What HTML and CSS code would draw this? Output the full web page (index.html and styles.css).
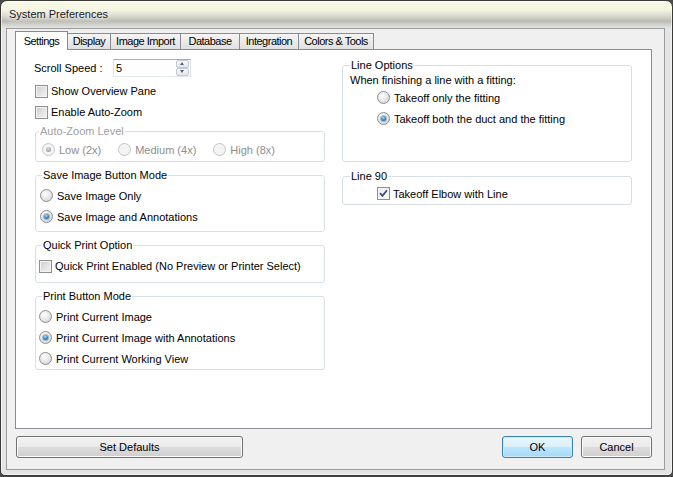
FILE: index.html
```html
<!DOCTYPE html>
<html>
<head>
  <title>System Preferences</title>
  <link rel="stylesheet" href="styles.css">
</head>
<body>
  <div class="window">
    <div class="titlebar">System Preferences</div>

    <div class="client">
      <div class="tabs">
        <div class="tab tab-settings selected">Settings</div>
        <div class="tab tab-display">Display</div>
        <div class="tab tab-import">Image Import</div>
        <div class="tab tab-database">Database</div>
        <div class="tab tab-integration">Integration</div>
        <div class="tab tab-colors">Colors &amp; Tools</div>
      </div>

      <div class="tab-page">
        <!-- left column -->
        <div class="column">
          <div class="speed-row">
            <span class="speed-label">Scroll Speed :</span>
            <div class="spin">
              <span>5</span>
              <div class="spin-buttons">
                <span class="spin-btn up"></span>
                <span class="spin-btn down"></span>
              </div>
            </div>
          </div>
          <div class="option top-check"><span class="checkbox"></span>Show Overview Pane</div>
          <div class="option top-check"><span class="checkbox"></span>Enable Auto-Zoom</div>

          <fieldset class="group group-zoom disabled">
            <legend>Auto-Zoom Level</legend>
            <div class="zoom-levels">
              <div class="option"><span class="radio checked"></span>Low (2x)</div>
              <div class="option"><span class="radio"></span>Medium (4x)</div>
              <div class="option"><span class="radio"></span>High (8x)</div>
            </div>
          </fieldset>

          <fieldset class="group group-save">
            <legend>Save Image Button Mode</legend>
            <div class="group-body">
              <div class="option row"><span class="radio"></span>Save Image Only</div>
              <div class="option row"><span class="radio checked"></span>Save Image and Annotations</div>
            </div>
          </fieldset>

          <fieldset class="group group-quick">
            <legend>Quick Print Option</legend>
            <div class="group-body">
              <div class="option row-tall"><span class="checkbox"></span>Quick Print Enabled (No Preview or Printer Select)</div>
            </div>
          </fieldset>

          <fieldset class="group group-print">
            <legend>Print Button Mode</legend>
            <div class="group-body">
              <div class="option row"><span class="radio"></span>Print Current Image</div>
              <div class="option row"><span class="radio checked"></span>Print Current Image with Annotations</div>
              <div class="option row"><span class="radio"></span>Print Current Working View</div>
            </div>
          </fieldset>
        </div>

        <!-- right column -->
        <div class="column right">
          <fieldset class="group group-line">
            <legend>Line Options</legend>
            <div class="group-body">
              <div class="line-desc">When finishing a line with a fitting:</div>
              <div class="line-choices">
                <div class="option row"><span class="radio"></span>Takeoff only the fitting</div>
                <div class="option row"><span class="radio checked"></span>Takeoff both the duct and the fitting</div>
              </div>
            </div>
          </fieldset>

          <fieldset class="group group-line90">
            <legend>Line 90</legend>
            <div class="group-body">
              <div class="option row">
                <span class="checkbox checked">
                  <svg width="11" height="11" viewBox="0 0 11 11"><path d="M2 5.2 L4.4 7.8 L9 2.2" fill="none" stroke="#3b4f86" stroke-width="1.8"/></svg>
                </span>Takeoff Elbow with Line
              </div>
            </div>
          </fieldset>
        </div>
      </div>

      <div class="buttons">
        <div class="btn btn-defaults">Set Defaults</div>
        <div class="btn btn-ok default">OK</div>
        <div class="btn btn-cancel">Cancel</div>
      </div>
    </div>
  </div>
</body>
</html>
```

FILE: styles.css
```css
* {
  box-sizing: border-box;
}

body {
  margin: 0;
  background-color: #4a4a4a;
  font-family: "Liberation Sans", Arial, sans-serif;
  font-size: 11px;
  color: #000;
}

.window {
  width: 673px;
  height: 476px;
  border: 1px solid #3a3a36;
  border-radius: 7px 7px 5px 5px;
  overflow: hidden;
  background: linear-gradient(to bottom, #f8f8e6 0px, #f5f5e2 9px, #dadace 15px, #babab2 20px, #d4d4d0 24px, #e3e4e5 27px, #e3e4e5 100%);
  box-shadow: inset 0 0 0 1px rgba(255, 255, 255, 0.6);
}

.titlebar {
  height: 27px;
  line-height: 27px;
  padding-left: 8px;
  color: #1a1a1a;
  text-shadow: 0 0 6px #fff, 0 0 10px #fff;
}

.client {
  width: 659px;
  height: 442px;
  margin-left: 5px;
  border: 1px solid #9b9b9b;
  background-color: #f0f0f0;
  padding: 2px 12px 0 8px;
}

/* tab strip */
.tabs {
  display: flex;
  align-items: flex-end;
  height: 18px;
}

.tab {
  height: 16px;
  line-height: 15px;
  margin-left: -1px;
  text-align: center;
  letter-spacing: -0.5px;
  border: 1px solid #898c95;
  border-bottom: none;
  background: linear-gradient(to bottom, #f5f5f5, #e0e0e0);
}

.tab.selected {
  position: relative;
  z-index: 1;
  height: 19px;
  line-height: 18px;
  margin-bottom: -1px;
  background: #fff;
}

.tab-settings { width: 53px; margin-left: 0; }
.tab-display { width: 44px; }
.tab-import { width: 71px; }
.tab-database { width: 60px; }
.tab-integration { width: 60px; }
.tab-colors { width: 76px; }

.tab-page {
  display: flex;
  gap: 17px;
  height: 380px;
  padding: 0 19px;
  border: 1px solid #898c95;
  background-color: #fff;
}

.column {
  width: 290px;
}

/* scroll speed */
.speed-row {
  display: flex;
  align-items: center;
  margin-top: 9px;
  height: 18px;
}

.speed-label {
  width: 79px;
  margin-left: -1px;
}

.spin {
  display: flex;
  align-items: center;
  width: 78px;
  height: 18px;
  padding-left: 2px;
  border: 1px solid #abadb3;
  border-color: #abadb3 #dbdfe6 #e3e9ef #e2e3ea;
  background-color: #fff;
}

.spin-buttons {
  display: flex;
  flex-direction: column;
  margin-left: auto;
  margin-right: 1px;
  width: 13px;
  height: 16px;
}

.spin-btn {
  position: relative;
  height: 8px;
  border: 1px solid #c3c8d1;
  border-radius: 2px;
  background: linear-gradient(to bottom, #f7f8fa, #e3e6eb);
}

.spin-btn::after {
  content: '';
  position: absolute;
  left: 3px;
  top: 1px;
  border-left: 2.5px solid transparent;
  border-right: 2.5px solid transparent;
}

.spin-btn.up::after {
  border-bottom: 3px solid #4d6185;
}

.spin-btn.down::after {
  border-top: 3px solid #4d6185;
}

/* options */
.option {
  display: flex;
  align-items: center;
  line-height: 14px;
  white-space: nowrap;
}

.top-check {
  height: 14px;
  margin-top: 7px;
}

.row {
  height: 21px;
}

.row-tall {
  height: 22px;
}

.checkbox {
  position: relative;
  width: 13px;
  height: 13px;
  margin-right: 3px;
  border: 1px solid #8f8f8f;
  background: linear-gradient(135deg, #cdcdcd, #f6f6f6);
  box-shadow: inset 0 0 0 1px #f3f3f3;
  flex-shrink: 0;
}

.checkbox.checked {
  background: linear-gradient(135deg, #e8ecf2, #fbfcfd);
}

.checkbox svg {
  display: block;
}

.radio {
  position: relative;
  width: 13px;
  height: 13px;
  margin-right: 4px;
  border-radius: 50%;
  border: 1px solid #8e8f8f;
  background: radial-gradient(circle at 40% 35%, #ffffff 0%, #e9e9e9 45%, #cbcbcb 100%);
  flex-shrink: 0;
}

.radio.checked::after {
  content: '';
  position: absolute;
  left: 3px;
  top: 3px;
  width: 5px;
  height: 5px;
  border-radius: 50%;
  background: radial-gradient(circle at 45% 35%, #b4e2ff 0%, #3f8fcf 45%, #0f4676 100%);
  box-shadow: 0 0 0 1px rgba(40, 80, 120, 0.35);
}

/* group boxes */
.group {
  margin: 0;
  padding: 0;
  min-width: 0;
  border: 1px solid #d5dfe5;
  border-radius: 3px;
}

.group legend {
  margin-left: 6px;
  padding: 0 1px;
  line-height: 14px;
}

.right .group legend {
  margin-left: 7px;
}

.group-zoom {
  margin-top: 5px;
}

.group-zoom legend {
  margin-left: 3px;
}

.disabled legend {
  color: #a0a0a0;
}

.disabled .option {
  color: #8d8d8d;
}

.disabled .radio {
  border-color: #c4c4c4;
  background: #f4f4f4;
}

.disabled .radio.checked::after {
  background: radial-gradient(circle at 45% 35%, #e0e0e0 0%, #a8a8a8 60%, #8a8a8a 100%);
  box-shadow: none;
}

.zoom-levels {
  display: flex;
  gap: 17px;
  height: 23px;
  align-items: center;
  padding-left: 6px;
}

.group-save {
  margin-top: 6px;
}

.group-save .group-body {
  padding: 3px 0 4px 4px;
}

.group-quick {
  margin-top: 6px;
}

.group-quick .group-body {
  padding: 3px 0 5px 3px;
}

.group-print {
  margin-top: 6px;
}

.group-print .group-body {
  padding: 3px 0 0 3px;
}

.group-line {
  margin-top: 8px;
}

.group-line .group-body {
  padding: 1px 0 32px 7px;
}

.line-desc {
  height: 14px;
  line-height: 14px;
}

.line-choices {
  padding-left: 27px;
}

.group-line90 {
  margin-top: 7px;
}

.group-line90 .group-body {
  padding-left: 34px;
}

/* bottom buttons */
.buttons {
  display: flex;
  margin-top: 7px;
}

.btn {
  display: flex;
  align-items: center;
  justify-content: center;
  height: 22px;
  border: 1px solid #707070;
  border-radius: 3px;
  background: linear-gradient(to bottom, #f2f2f2 0%, #ebebeb 50%, #dddddd 50%, #cfcfcf 100%);
  box-shadow: inset 0 0 0 1px #fcfcfc;
}

.btn.default {
  border-color: #3c7fb1;
  background: linear-gradient(to bottom, #eaf6fd 0%, #d9f0fc 50%, #bee6fd 50%, #a7d9f5 100%);
  box-shadow: inset 0 0 0 1px #c8ecfd;
}

.btn-defaults {
  width: 227px;
  margin-left: 1px;
}

.btn-ok {
  width: 71px;
  margin-left: auto;
}

.btn-cancel {
  width: 71px;
  margin-left: 8px;
}
```
